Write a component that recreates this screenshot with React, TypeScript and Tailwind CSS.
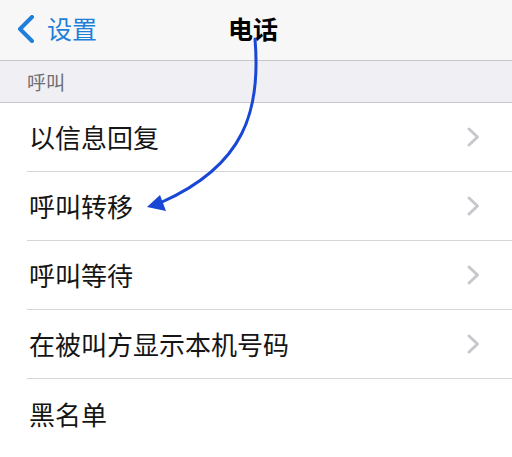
const rows = ["以信息回复", "呼叫转移", "呼叫等待", "在被叫方显示本机号码", "黑名单"];

function BackChevron() {
  return (
    <svg width="20" height="28" viewBox="0 0 20 28" className="shrink-0">
      <path
        d="M16 2 L4 14 L16 26"
        fill="none"
        stroke="#1f7fd9"
        strokeWidth="4"
        strokeLinecap="round"
        strokeLinejoin="round"
      />
    </svg>
  );
}

function RowChevron() {
  return (
    <svg width="15" height="22" viewBox="0 0 15 22" className="shrink-0">
      <path
        d="M3 3 L11.5 11 L3 19"
        fill="none"
        stroke="#c7c7cc"
        strokeWidth="3"
        strokeLinecap="round"
        strokeLinejoin="round"
      />
    </svg>
  );
}

function Arrow() {
  return (
    <svg
      className="pointer-events-none absolute left-0 top-0"
      width="512"
      height="457"
      viewBox="0 0 512 457"
    >
      <path
        d="M255 39 C 261 110, 245 165, 162 202"
        fill="none"
        stroke="#1847d6"
        strokeWidth="3"
        strokeLinecap="round"
      />
      <polygon points="147,207 160,195 166,211" fill="#1847d6" />
    </svg>
  );
}

export default function App() {
  return (
    <div
      className="relative h-[457px] w-[512px] overflow-hidden bg-white"
      style={{ fontFamily: '"Noto Sans CJK SC", "Noto Sans", sans-serif' }}
    >
      <div className="relative flex h-[61px] items-center border-b border-[#c8c7cc] bg-[#f7f7f8] px-[16px]">
        <div className="flex items-center gap-[11px] pb-[3px]">
          <BackChevron />
          <span className="text-[25px] leading-none text-[#1f7fd9]">设置</span>
        </div>
        <div className="absolute inset-x-0 top-[13px] flex justify-center pr-[6px]">
          <span className="text-[25px] font-bold leading-[30px] text-black">电话</span>
        </div>
      </div>

      <div className="flex h-[42px] items-center border-b border-[#c8c7cc] bg-[#efeff4] pl-[27px]">
        <span className="text-[19px] leading-none text-[#6d6d72]">呼叫</span>
      </div>

      <div className="flex flex-col">
        {rows.map((label, i) => (
          <div key={label} className="pl-[27px]">
            <div
              className={
                i < rows.length - 1
                  ? "flex h-[69px] items-center justify-between border-b border-[#d6d6da] pl-[2px] pr-[31px]"
                  : "flex h-[69px] items-center justify-between pl-[2px] pr-[31px]"
              }
            >
              <span className="text-[26px] leading-none text-[#151515]">{label}</span>
              {i < 4 && <RowChevron />}
            </div>
          </div>
        ))}
      </div>

      <Arrow />
    </div>
  );
}
